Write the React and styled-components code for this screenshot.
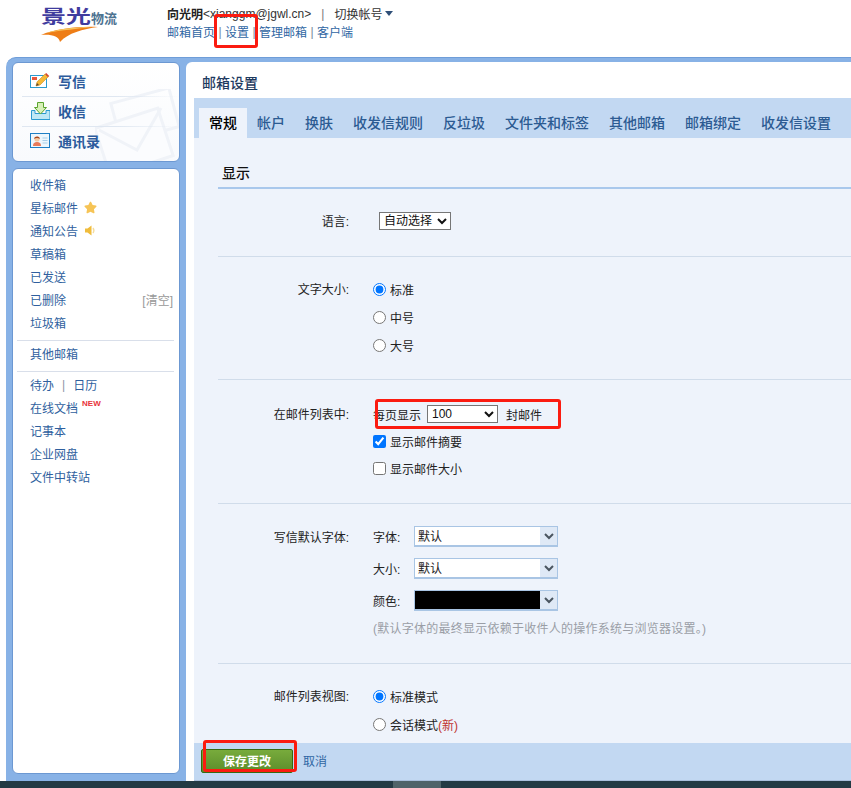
import styled, { createGlobalStyle } from 'styled-components';
import { FaStar } from 'react-icons/fa';

const GlobalStyle = createGlobalStyle`
  html, body {
    margin: 0;
    padding: 0;
    background: #fff;
    overflow: hidden;
  }
  * {
    box-sizing: border-box;
  }
  body, select, input, button {
    font-family: "Liberation Sans", "Noto Sans CJK SC", sans-serif;
    font-size: 12px;
  }
`;

const TABS = ['常规', '帐户', '换肤', '收发信规则', '反垃圾', '文件夹和标签', '其他邮箱', '邮箱绑定', '收发信设置'];
const FOLDERS = ['收件箱', '星标邮件', '通知公告', '草稿箱', '已发送', '已删除', '垃圾箱'];

const ComposeIcon = () => (
  <svg width="20" height="16" viewBox="0 0 20 16">
    <rect x="0.5" y="2.5" width="16" height="12" fill="#fff" stroke="#2a9ad0" />
    <rect x="2" y="4" width="5" height="3" fill="#e8563c" />
    <path d="M6 13l1-4 8-8 3 3-8 8z" fill="#f5b937" stroke="#c98a1e" strokeWidth="0.6" />
    <path d="M15 1l1.2-1 3 3-1 1.2z" fill="#d9472f" />
    <path d="M6 13l1-3 2 2z" fill="#5b4630" />
  </svg>
);

const InboxIcon = () => (
  <svg width="19" height="18" viewBox="0 0 19 18">
    <path d="M0.5 8.5h3.5v3h11v-3h4v9h-18.500z" fill="#bfe8f5" stroke="#2a9ad0" />
    <path d="M6.500 0.500h6v5h3l-6 6.500-6-6.500h3z" fill="#d8f0b8" stroke="#5aa52e" />
  </svg>
);

const ContactIcon = () => (
  <svg width="20" height="15" viewBox="0 0 20 15">
    <rect x="0.5" y="0.5" width="19" height="14" fill="#eef7fd" stroke="#1f7fc4" />
    <path d="M3 13c0-3 1.500-4 4-4s4 1 4 4z" fill="#e87a5a" />
    <circle cx="7" cy="6" r="2.600" fill="#f6c9a0" />
    <path d="M4.200 6c0-3 5.600-3.400 5.600 0-1.600-1.200-4-1.200-5.600 0z" fill="#a8481f" />
    <path d="M12.500 5h5M12.500 7.500h5M12.500 10h5" stroke="#a9cfe8" />
  </svg>
);

const SpeakerIcon = () => (
  <svg width="11" height="11" viewBox="0 0 11 11">
    <path d="M0 3.500h2.500L6.500 0.500v10L2.500 7.500H0z" fill="#f0bc3c" />
    <path d="M8 3c1 1.400 1 3.600 0 5" fill="none" stroke="#f4dc9c" strokeWidth="1.400" />
  </svg>
);

const Chevron = () => (
  <svg width="10" height="7" viewBox="0 0 10 7">
    <path d="M1 1l4 4 4-4" fill="none" stroke="#4a5560" strokeWidth="2" />
  </svg>
);

const Main = () => (
  <Page>
    <GlobalStyle />
    <Header>
      <Logo>
        <LogoText>
          <LogoBig>景光</LogoBig>
          <LogoSmall>物流</LogoSmall>
        </LogoText>
        <svg width="58" height="16" viewBox="0 0 58 16">
          <path d="M0 9C14 3 36 0 57 1 42 3 27 7 19 16 18 10 10 8 0 9z" fill="#ee7d16" />
          <path d="M5 7C18 3 34 1 50 1 36 3 22 4 5 7z" fill="#f6c65e" />
        </svg>
      </Logo>
      <Account>
        <AccountLine>
          <UserName>向光明</UserName>
          <span>&lt;xianggm@jgwl.cn&gt;</span>
          <LineGap>|</LineGap>
          <span>切换帐号</span>
          <Caret />
        </AccountLine>
        <AccountLine>
          <TopLink>邮箱首页</TopLink>
          <Pipe>|</Pipe>
          <TopLink>设置</TopLink>
          <Pipe>|</Pipe>
          <TopLink>管理邮箱</TopLink>
          <Pipe>|</Pipe>
          <TopLink>客户端</TopLink>
        </AccountLine>
      </Account>
    </Header>

    <Frame>
      <Sidebar>
        <ActionCard>
          <Watermark width="90" height="80" viewBox="0 0 90 80">
            <g fill="none" stroke="#f0f3f8" strokeWidth="3">
              <rect x="20" y="6" width="60" height="40" transform="rotate(-15 50 26)" />
              <rect x="6" y="28" width="66" height="50" fill="#fbfcfe" transform="rotate(-18 39 53)" />
              <path d="M4 41l38 20 24-42" />
            </g>
          </Watermark>
          <ActionRow>
            <ActionIcon><ComposeIcon /></ActionIcon>
            写信
          </ActionRow>
          <ActionRow>
            <ActionIcon><InboxIcon /></ActionIcon>
            收信
          </ActionRow>
          <ActionRow $last>
            <ActionIcon><ContactIcon /></ActionIcon>
            通讯录
          </ActionRow>
        </ActionCard>

        <FolderCard>
          {FOLDERS.map((name) => (
            <FolderRow key={name}>
              {name}
              {name === '星标邮件' && <StarIcon />}
              {name === '通知公告' && <FolderBadge><SpeakerIcon /></FolderBadge>}
              {name === '已删除' && <ClearLink>[清空]</ClearLink>}
            </FolderRow>
          ))}
          <SideDivider />
          <FolderRow>其他邮箱</FolderRow>
          <SideDivider />
          <FolderRow>待办<SoftPipe>|</SoftPipe>日历</FolderRow>
          <FolderRow>在线文档<NewTag>NEW</NewTag></FolderRow>
          <FolderRow>记事本</FolderRow>
          <FolderRow>企业网盘</FolderRow>
          <FolderRow>文件中转站</FolderRow>
        </FolderCard>
      </Sidebar>

      <MainPanel>
        <PanelTitle>邮箱设置</PanelTitle>
        <TabBar>
          {TABS.map((tab, i) => (
            <Tab key={tab} $active={i === 0}>{tab}</Tab>
          ))}
        </TabBar>

        <Content>
          <SectionTitle>显示</SectionTitle>

          <Section $top={23} $bottom={26}>
            <Row $h={18}>
              <RowLabel>语言:</RowLabel>
              <NativeSelect $width={72} defaultValue="auto">
                <option value="auto">自动选择</option>
              </NativeSelect>
            </Row>
          </Section>

          <Section $top={18} $bottom={20}>
            <Row>
              <RowLabel>文字大小:</RowLabel>
              <OptionLine><Radio name="size" defaultChecked />标准</OptionLine>
            </Row>
            <Row>
              <span />
              <OptionLine><Radio name="size" />中号</OptionLine>
            </Row>
            <Row>
              <span />
              <OptionLine><Radio name="size" />大号</OptionLine>
            </Row>
          </Section>

          <Section $top={20} $bottom={21}>
            <Row>
              <RowLabel>在邮件列表中:</RowLabel>
              <PerPage>
                每页显示
                <NativeSelect $width={71} defaultValue="100">
                  <option value="100">100</option>
                </NativeSelect>
                封邮件
              </PerPage>
            </Row>
            <Row $h={27}>
              <span />
              <OptionLine><Check defaultChecked />显示邮件摘要</OptionLine>
            </Row>
            <Row $h={27}>
              <span />
              <OptionLine><Check />显示邮件大小</OptionLine>
            </Row>
          </Section>

          <Section $top={22} $bottom={25}>
            <FontRow>
              <RowLabel>写信默认字体:</RowLabel>
              <FontLine>
                <FontName>字体:</FontName>
                <FontSelect><FontValue>默认</FontValue><ArrowBox><Chevron /></ArrowBox></FontSelect>
              </FontLine>
            </FontRow>
            <FontRow>
              <span />
              <FontLine>
                <FontName>大小:</FontName>
                <FontSelect><FontValue>默认</FontValue><ArrowBox><Chevron /></ArrowBox></FontSelect>
              </FontLine>
            </FontRow>
            <FontRow>
              <span />
              <FontLine>
                <FontName>颜色:</FontName>
                <FontSelect><FontValue $black /><ArrowBox><Chevron /></ArrowBox></FontSelect>
              </FontLine>
            </FontRow>
            <FontRow>
              <span />
              <Note>(默认字体的最终显示依赖于收件人的操作系统与浏览器设置。)</Note>
            </FontRow>
          </Section>

          <Section $top={18} $bottom={5} $plain>
            <Row>
              <RowLabel>邮件列表视图:</RowLabel>
              <OptionLine><Radio name="view" defaultChecked />标准模式</OptionLine>
            </Row>
            <Row>
              <span />
              <OptionLine><Radio name="view" />会话模式<NewMark>(新)</NewMark></OptionLine>
            </Row>
          </Section>
        </Content>

        <Footer>
          <SaveButton>保存更改</SaveButton>
          <CancelLink>取消</CancelLink>
        </Footer>
      </MainPanel>
    </Frame>

    <ScrollBar>
      <ScrollThumb />
    </ScrollBar>

    <Mark $left={214} $top={14} $w={44} $h={34} />
    <Mark $left={375} $top={399} $w={186} $h={30} />
    <Mark $left={203} $top={740} $w={94} $h={32} />
  </Page>
);

export default Main;

const Page = styled.div`
  position: relative;
  width: 851px;
  height: 788px;
  display: flex;
  flex-direction: column;
  overflow: hidden;
  color: #222;
`;

const Header = styled.header`
  height: 57px;
  display: flex;
  padding-left: 41px;
  flex-shrink: 0;
`;

const Logo = styled.div`
  width: 126px;
  padding-top: 8px;
  display: flex;
  flex-direction: column;
`;

const LogoText = styled.div`
  display: flex;
  align-items: flex-end;
  height: 18px;
`;

const LogoBig = styled.span`
  font-size: 25px;
  line-height: 18px;
  font-weight: 700;
  color: #3f3c9e;
  transform: scaleY(0.72);
`;

const LogoSmall = styled.span`
  font-size: 13px;
  line-height: 14px;
  font-weight: 700;
  color: #4d7391;
`;

const Account = styled.div`
  padding-top: 5px;
  display: flex;
  flex-direction: column;
`;

const AccountLine = styled.div`
  display: flex;
  align-items: center;
  height: 18px;
  padding-bottom: 1px;
  color: #333;
  white-space: nowrap;
`;

const UserName = styled.span`
  font-weight: 700;
  color: #222;
`;

const LineGap = styled.span`
  margin: 0 10px;
  color: #777;
`;

const Caret = styled.span`
  margin-left: 3px;
  border-left: 4px solid transparent;
  border-right: 4px solid transparent;
  border-top: 5px solid #2f4f78;
`;

const TopLink = styled.span`
  color: #2f66a3;
`;

const Pipe = styled.span`
  width: 10px;
  text-align: center;
  color: #78889a;
`;

const Frame = styled.div`
  flex: 1;
  min-height: 0;
  margin-left: 6px;
  padding: 4px 0 0 6px;
  display: flex;
  gap: 6px;
  background: #88b2e6;
  border-top: 1px solid #6f9dd8;
  border-top-left-radius: 10px;
`;

const Sidebar = styled.aside`
  width: 168px;
  flex-shrink: 0;
  padding-bottom: 7px;
  display: flex;
  flex-direction: column;
  gap: 6px;
`;

const ActionCard = styled.div`
  position: relative;
  height: 100px;
  padding-top: 4px;
  overflow: hidden;
  background: linear-gradient(#fff, #f8fafd);
  border: 1px solid #6c98d2;
  border-radius: 6px;
`;

const Watermark = styled.svg`
  position: absolute;
  right: -6px;
  bottom: -8px;
`;

const ActionRow = styled.div`
  position: relative;
  height: 30px;
  margin-left: 9px;
  padding: 0 0 2px 8px;
  display: flex;
  align-items: center;
  font-size: 14px;
  font-weight: 700;
  color: #2c5b9c;
  border-bottom: 1px solid;
  border-image: ${(p) =>
    p.$last
      ? 'linear-gradient(90deg, transparent, transparent) 1'
      : 'linear-gradient(90deg, #dfe7f1 60%, transparent 100%) 1'};
`;

const ActionIcon = styled.span`
  width: 20px;
  margin-right: 8px;
  display: flex;
  justify-content: center;
`;

const FolderCard = styled.nav`
  flex: 1;
  padding-top: 5px;
  background: #fff;
  border: 1px solid #6c98d2;
  border-radius: 6px;
`;

const FolderRow = styled.div`
  height: 23px;
  padding: 0 6px 2px 17px;
  display: flex;
  align-items: center;
  color: #2f5f9e;
`;

const StarIcon = styled(FaStar)`
  margin-left: 6px;
  width: 13px;
  height: 13px;
  color: #f6c456;
`;

const FolderBadge = styled.span`
  margin-left: 7px;
  display: flex;
`;

const ClearLink = styled.span`
  margin-left: auto;
  color: #999;
`;

const SideDivider = styled.div`
  height: 1px;
  margin: 5px 5px 2px 4px;
  background: #d9dfea;
`;

const SoftPipe = styled.span`
  margin: 0 8px;
  color: #8a95a5;
`;

const NewTag = styled.sup`
  align-self: flex-start;
  margin: 1px 0 0 4px;
  font-size: 8px;
  line-height: 12px;
  font-weight: 700;
  color: #e8343a;
`;

const MainPanel = styled.main`
  flex: 1;
  min-width: 0;
  padding-left: 8px;
  display: flex;
  flex-direction: column;
  background: #fff;
  border-top-left-radius: 6px;
`;

const PanelTitle = styled.h2`
  height: 36px;
  margin: 0;
  padding: 3px 0 0 8px;
  display: flex;
  align-items: center;
  font-size: 14px;
  font-weight: 500;
  color: #1e3a5f;
`;

const TabBar = styled.div`
  height: 40px;
  padding: 10px 0 0 5px;
  display: flex;
  background: #c2d8f2;
`;

const Tab = styled.div`
  padding: 0 10px 2px;
  display: flex;
  align-items: center;
  font-size: 14px;
  font-weight: 500;
  white-space: nowrap;
  color: ${(p) => (p.$active ? '#000' : '#2c5b92')};
  background: ${(p) => (p.$active ? '#eef3fb' : 'transparent')};
`;

const Content = styled.div`
  flex: 1;
  min-height: 0;
  padding-left: 24px;
  overflow: hidden;
  background: #eef3fb;
`;

const SectionTitle = styled.h3`
  margin: 0;
  padding: 26px 0 5px 4px;
  font-size: 14px;
  line-height: 18px;
  font-weight: 500;
  color: #111;
  border-bottom: 2px solid #a9c8ec;
`;

const Section = styled.section`
  padding: ${(p) => p.$top}px 0 ${(p) => p.$bottom}px;
  border-bottom: ${(p) => (p.$plain ? 'none' : '1px solid #d0dcea')};
`;

const Row = styled.div`
  height: ${(p) => p.$h || 28}px;
  display: grid;
  grid-template-columns: 134px 1fr;
  column-gap: 21px;
  align-items: center;
`;

const FontRow = styled(Row)`
  height: auto;
  margin-bottom: 11px;

  &:last-child {
    margin: -2px 0 0;
  }
`;

const RowLabel = styled.label`
  padding: 0 3px 1px 0;
  text-align: right;
  color: #222;
`;

const OptionLine = styled.label`
  display: flex;
  align-items: center;
  color: #222;
`;

const Radio = styled.input.attrs({ type: 'radio' })`
  width: 13px;
  height: 13px;
  margin: 0 4px 0 0;
`;

const Check = styled.input.attrs({ type: 'checkbox' })`
  width: 13px;
  height: 13px;
  margin: 0 4px 0 0;
`;

const NativeSelect = styled.select`
  width: ${(p) => p.$width}px;
  height: 18px;
  margin-left: 6px;
  margin-right: 8px;
  font-size: 12px;
  background: #fff;
  color: #111;
`;

const PerPage = styled.div`
  display: flex;
  align-items: center;
  color: #222;
`;

const FontLine = styled.div`
  display: flex;
  align-items: center;
`;

const FontName = styled.span`
  width: 41px;
  padding-bottom: 1px;
  color: #222;
`;

const FontSelect = styled.div`
  width: 144px;
  height: 21px;
  display: flex;
  background: #fff;
  border: 2px solid #a9c5e4;
  border-width: 1px 1px 2px 1px;
`;

const FontValue = styled.span`
  flex: 1;
  padding: 0 0 1px 3px;
  display: flex;
  align-items: center;
  color: #222;
  background: ${(p) => (p.$black ? '#000' : '#fff')};
`;

const ArrowBox = styled.span`
  width: 17px;
  display: flex;
  align-items: center;
  justify-content: center;
  background: #dfe9f6;
`;

const Note = styled.div`
  line-height: 18px;
  letter-spacing: 0.25px;
  white-space: nowrap;
  color: #9a9ea6;
`;

const NewMark = styled.span`
  color: #c0322e;
`;

const Footer = styled.footer`
  height: 38px;
  padding: 0 0 2px 7px;
  display: flex;
  align-items: center;
  gap: 10px;
  background: #c2d8f2;
  border-bottom: 1px solid #a9bfdc;
  flex-shrink: 0;
`;

const SaveButton = styled.button`
  width: 92px;
  height: 24px;
  padding: 0;
  font-size: 12px;
  font-weight: 700;
  color: #fff;
  background: linear-gradient(#78ab3c, #5b8d2b);
  border: 1px solid #37690f;
  border-radius: 2px;
`;

const CancelLink = styled.span`
  color: #2f66a3;
`;

const ScrollBar = styled.div`
  height: 7px;
  padding-left: 393px;
  flex-shrink: 0;
  background: #233a44;
`;

const ScrollThumb = styled.div`
  width: 48px;
  height: 100%;
  background: #4f6369;
`;

const Mark = styled.div`
  position: absolute;
  left: ${(p) => p.$left}px;
  top: ${(p) => p.$top}px;
  width: ${(p) => p.$w}px;
  height: ${(p) => p.$h}px;
  border: 3px solid #fb1b10;
  border-radius: 3px;
  pointer-events: none;
`;
